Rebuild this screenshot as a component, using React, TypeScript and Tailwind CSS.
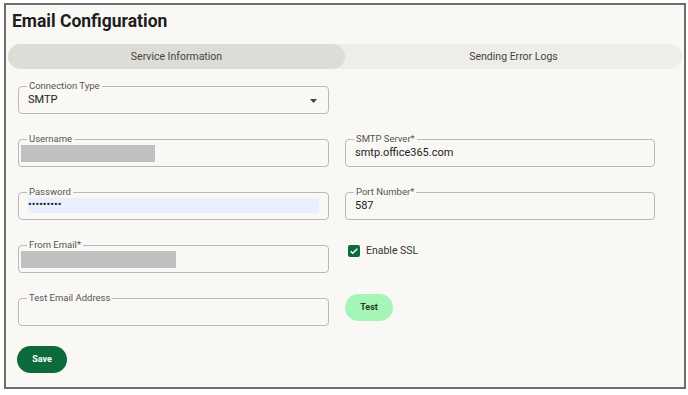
import { ReactNode } from "react";

const font = { fontFamily: "Roboto, 'Noto Sans', sans-serif" };

const Field = ({ label, children }: { label: string; children?: ReactNode }) => (
  <fieldset className="h-[34px] border border-[#b9b9b9] rounded-[4px] px-[9px] m-0 min-w-0">
    <legend className="px-[2px] ml-[-1px] text-[9.5px] leading-[12px] text-[#555]">{label}</legend>
    <div className="h-[17px] flex items-center text-[11px] text-[#222]">{children}</div>
  </fieldset>
);

const Redacted = ({ width }: { width: number }) => (
  <div className="h-[17px] bg-[#c0c0c0] ml-[-7px]" style={{ width }} />
);

export default function App() {
  return (
    <div className="bg-white w-[688px] h-[395px] pl-[4px] pt-[3px]" style={font}>
      <div className="w-[682px] h-[386px] border-2 border-[#6e6e6e] bg-[#f9f8f4] px-[2px]">
        <h1 className="mt-[4px] ml-[4px] h-[24px] text-[17.5px] leading-[24px] font-bold text-[#1d1d1d]">
          Email Configuration
        </h1>

        <div className="mt-[11px] h-[25px] rounded-full bg-[#eeede9] flex text-[10.5px] text-[#444]">
          <div className="flex-1 rounded-full bg-[#dddcd7] flex items-center justify-center">
            Service Information
          </div>
          <div className="flex-1 flex items-center justify-center">Sending Error Logs</div>
        </div>

        <div className="mt-[11px] ml-[10px] w-[637px] grid grid-cols-[311px_310px] gap-x-[16px] gap-y-[19px]">
          <Field label="Connection Type">
            <span className="flex-1">SMTP</span>
            <svg width="7" height="4" viewBox="0 0 7 4" className="mr-[2px]">
              <path d="M0 0h7L3.5 4z" fill="#444" />
            </svg>
          </Field>
          <div />

          <Field label="Username">
            <Redacted width={134} />
          </Field>
          <Field label="SMTP Server*">smtp.office365.com</Field>

          <Field label="Password">
            <div className="w-full h-[15px] self-start bg-[#e8f0fe] flex items-center text-[11px]">
              •••••••••
            </div>
          </Field>
          <Field label="Port Number*">587</Field>

          <Field label="From Email*">
            <Redacted width={155} />
          </Field>
          <div className="pt-[4px] pl-[3px] flex items-start">
            <div className="flex items-center gap-[6px]">
              <div className="w-[12px] h-[12px] rounded-[2px] bg-[#0e6b3b] flex items-center justify-center">
                <svg width="10" height="10" viewBox="0 0 24 24" fill="none" stroke="white" strokeWidth="3.5">
                  <path d="M4 12.5l5 5L20 6.5" />
                </svg>
              </div>
              <span className="text-[10.5px] text-[#333]">Enable SSL</span>
            </div>
          </div>

          <Field label="Test Email Address" />
          <div className="pt-[1px]">
            <button className="w-[48px] h-[27px] rounded-full bg-[#a5f5b7] text-[9px] font-bold text-[#1f3b2a]">
              Test
            </button>
          </div>
        </div>

        <button className="mt-[20px] ml-[9px] w-[50px] h-[27px] rounded-full bg-[#0b6b3a] text-[9px] font-bold text-white">
          Save
        </button>
      </div>
    </div>
  );
}
